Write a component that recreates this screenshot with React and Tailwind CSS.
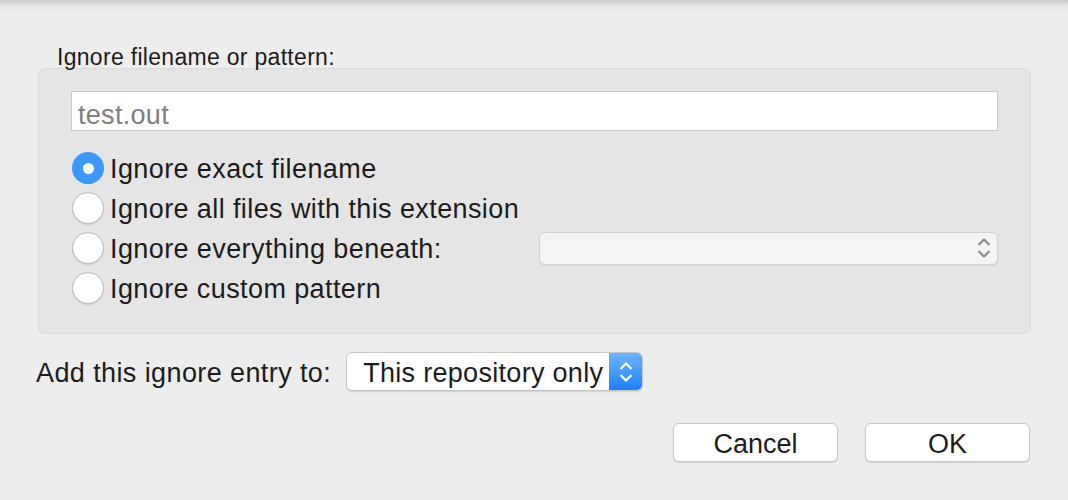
import React, { useState } from 'react';

const Chevrons = ({ color, className }) => (
  <svg width="16" height="24" viewBox="0 0 16 24" className={className}>
    <path d="M2.5 9 L8 3.5 L13.5 9" fill="none" stroke={color} strokeWidth="2.2" />
    <path d="M2.5 15 L8 20.5 L13.5 15" fill="none" stroke={color} strokeWidth="2.2" />
  </svg>
);

const Radio = ({ checked, onClick, label }) => (
  <div className="flex items-center h-[40px] cursor-default" onClick={onClick}>
    {checked ? (
      <div className="ml-px w-[32px] h-[32px] rounded-full bg-[#3d98fb] flex items-center justify-center shadow-[inset_0_-1px_1px_rgba(0,0,0,0.08)]">
        <div className="w-[11px] h-[11px] rounded-full bg-white" />
      </div>
    ) : (
      <div className="ml-px w-[32px] h-[32px] rounded-full bg-white border border-[#b9b9b9] shadow-[0_1px_1px_rgba(0,0,0,0.12)]" />
    )}
    <span className="ml-[6px] pt-[3px] text-[27px] tracking-[0.4px] leading-none text-[#1c1c1c]">{label}</span>
  </div>
);

export default function App() {
  const [mode, setMode] = useState(0);

  const options = [
    'Ignore exact filename',
    'Ignore all files with this extension',
    'Ignore everything beneath:',
    'Ignore custom pattern',
  ];

  return (
    <div
      className="w-[1068px] h-[500px] overflow-hidden bg-[linear-gradient(to_bottom,#c9c9c9,#e6e6e6_6px,#ededed_12px)] pl-[36px] pr-[37px] pt-[44px]"
      style={{ fontFamily: '"Liberation Sans", Arial, sans-serif' }}
    >
      <div className="ml-[21px] h-[24px] leading-[24px] pt-[1px] text-[23px] tracking-[0.3px] text-[#1c1c1c]">
        Ignore filename or pattern:
      </div>

      {/* group box */}
      <div className="ml-[2px] h-[266px] rounded-[7px] border border-[#dadada] bg-[#e5e5e5] pt-[22px] pl-[32px] pr-[32px]">
        <div className="h-[40px] bg-white border border-[#c8c8c8] flex items-center pl-[6px] pt-[8px]">
          <input
            placeholder="test.out"
            className="w-full outline-none bg-transparent text-[27px] tracking-[0.3px] leading-none text-[#1c1c1c] placeholder:text-[#808080]"
          />
        </div>

        <div className="mt-[17px]">
          <Radio checked={mode === 0} onClick={() => setMode(0)} label={options[0]} />
          <Radio checked={mode === 1} onClick={() => setMode(1)} label={options[1]} />
          <div className="flex items-center justify-between">
            <Radio checked={mode === 2} onClick={() => setMode(2)} label={options[2]} />
            <div className="w-[459px] h-[33px] rounded-[6px] bg-[#f4f4f4] border border-[#d0d0d0] shadow-[0_1px_1px_rgba(0,0,0,0.06)] flex items-center justify-end pr-[5px]">
              <Chevrons color="#8c8c8c" />
            </div>
          </div>
          <Radio checked={mode === 3} onClick={() => setMode(3)} label={options[3]} />
        </div>
      </div>

      {/* destination */}
      <div className="mt-[18px] flex items-center">
        <span className="pt-[3px] text-[27px] tracking-[0.4px] leading-none text-[#1c1c1c]">Add this ignore entry to:</span>
        <div className="ml-[15px] w-[297px] h-[39px] rounded-[6px] bg-white border border-[#c6c6c6] shadow-[0_1px_1px_rgba(0,0,0,0.12)] flex items-center overflow-hidden">
          <span className="flex-1 pl-[16px] pt-[3px] text-[27px] tracking-[0.3px] leading-none text-[#1c1c1c]">This repository only</span>
          <div className="w-[33px] h-full bg-[linear-gradient(to_bottom,#6db4fb,#1c82fb)] flex items-center justify-center">
            <Chevrons color="#ffffff" />
          </div>
        </div>
      </div>

      {/* buttons */}
      <div className="mt-[32px] flex justify-end gap-[27px] pr-px">
        <button className="w-[165px] h-[39px] rounded-[6px] bg-white border border-[#c6c6c6] shadow-[0_1px_1px_rgba(0,0,0,0.12)] pt-[3px] text-[27px] leading-none text-[#1c1c1c]">
          Cancel
        </button>
        <button className="w-[165px] h-[39px] rounded-[6px] bg-white border border-[#c6c6c6] shadow-[0_1px_1px_rgba(0,0,0,0.12)] pt-[3px] text-[27px] leading-none text-[#1c1c1c]">
          OK
        </button>
      </div>
    </div>
  );
}
